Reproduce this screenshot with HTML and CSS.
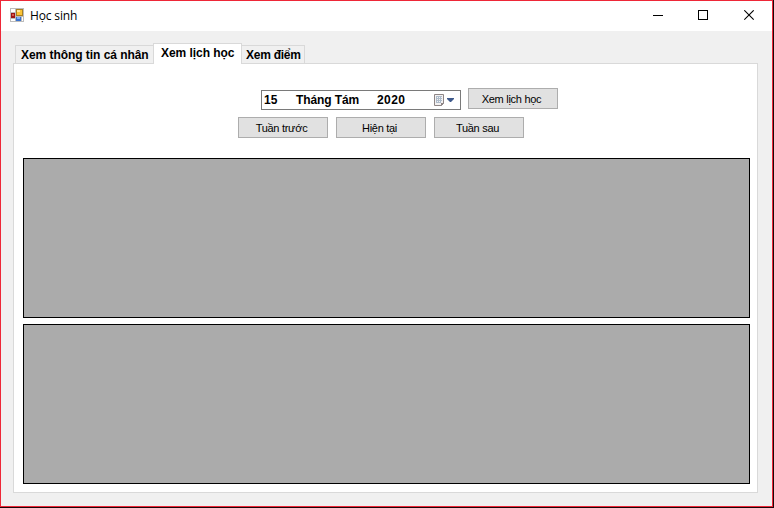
FILE: index.html
```html
<!DOCTYPE html>
<html lang="vi">
<head>
<meta charset="utf-8">
<title>Học sinh</title>
<link rel="stylesheet" href="styles.css">
</head>
<body>
<div class="window">
  <header class="titlebar">
    <svg class="app-icon" width="14" height="14" shape-rendering="crispEdges">
      <path fill="#bcbcbc" d="M0 0h14v14H0z"/>
      <path fill="#fff" d="M1 1h4v3H1zM1 11h4v2H1zM12 9h1v4h-1z"/>
      <path fill="#a98020" d="M6 1h7v7H6z"/>
      <path fill="#fbc437" d="M7 2h5v5H7z"/>
      <path fill="#ffe69a" d="M7 2h3v2H7z"/>
      <path fill="#9c1616" d="M1 5h4v5H1z"/>
      <path fill="#d85a4c" d="M2 6h2v2H2z"/>
      <path fill="#3a72cf" d="M6 9h5v4H6z"/>
      <path fill="#82b0f2" d="M7 9h3v2H7z"/>
    </svg>
    <span class="title">Học sinh</span>
    <div class="controls">
      <svg width="11" height="11" shape-rendering="crispEdges"><path fill="#000" d="M1 5h10v1H1z"/></svg>
      <svg width="11" height="11" shape-rendering="crispEdges"><path fill="none" stroke="#000" d="M.5 .5h9v9h-9z"/></svg>
      <svg width="11" height="11"><path fill="none" stroke="#000" stroke-width="1.1" d="M.3 .3l9.4 9.4M9.7 .3L.3 9.7"/></svg>
    </div>
  </header>
  <main class="client">
    <nav class="tabs">
      <div class="tab tab-info"><span>Xem thông tin cá nhân</span></div>
      <div class="tab tab-schedule active"><span>Xem lịch học</span></div>
      <div class="tab tab-marks"><span>Xem điểm</span></div>
    </nav>
    <section class="page">
      <div class="row date-row">
        <div class="datepicker">
          <span class="day">15</span><span class="month">Tháng Tám</span><span class="year">2020</span>
          <svg class="calendar" width="22" height="14">
            <path fill="#f3f1f1" stroke="#8d8585" d="M1.5 .5h9v9l-2 2h-7z"/>
            <path fill="#8d8585" d="M8 12v-3h3z"/>
            <path stroke="#aebccb" fill="none" d="M3 2.5h6M3 4.5h6M3 6.5h6M3 8.5h5M3.5 2v7M5.5 2v7M7.5 2v7"/>
            <path fill="#3f5a8c" d="M14 4h7v1l-3 3h-1l-3-3z"/>
          </svg>
        </div>
        <button class="btn"><span>Xem lịch học</span></button>
      </div>
      <div class="row week-row">
        <button class="btn"><span>Tuần trước</span></button>
        <button class="btn"><span>Hiện tại</span></button>
        <button class="btn"><span>Tuần sau</span></button>
      </div>
      <div class="grid"></div>
      <div class="grid"></div>
    </section>
  </main>
</div>
</body>
</html>
```
FILE: styles.css
```css
* { box-sizing: border-box; }
body {
  margin: 0;
  height: 508px;
  overflow: hidden;
  background: #1c0508;
  color: #000;
  font-family: "Liberation Sans", Arial, sans-serif;
}
.window {
  width: 773px;
  height: 507px;
  border: 1px solid #ee2737;
  background: #f0f0f0;
}
.titlebar {
  display: flex;
  height: 30px;
  padding-left: 9px;
  background: #fff;
}
.app-icon { margin-top: 7px; }
.title {
  margin-left: 6px;
  font: 12px/29px "Open Sans", sans-serif;
  letter-spacing: -0.15px;
}
.controls {
  display: flex;
  gap: 35px;
  margin: 9px 17px 0 auto;
}
.client { padding: 12px 14px 0 12px; }
.tabs {
  display: flex;
  align-items: flex-end;
  height: 21px;
  margin-bottom: -1px;
  padding-left: 2px;
}
.tab {
  height: 19px;
  border: 1px solid #d9d9d9;
  background: #f0f0f0;
  padding-left: 5px;
  font-size: 12px;
  font-weight: bold;
  line-height: 18px;
  letter-spacing: -0.05px;
  white-space: nowrap;
}
.tab-info { width: 139px; border-right: 0; }
.tab-schedule { width: 89px; margin-left: -1px; }
.tab-marks {
  width: 63px;
  border-left: 0;
  padding-left: 4px;
  letter-spacing: -0.25px;
}
.tab.active {
  z-index: 1;
  height: 21px;
  border-bottom: 0;
  background: #fff;
  padding-left: 7px;
}
.page {
  height: 430px;
  padding: 24px 7px 0 9px;
  border: 1px solid #d9d9d9;
  background: #fff;
}
.row { display: flex; gap: 8px; }
.date-row { height: 22px; padding-left: 238px; gap: 7px; }
.week-row { margin: 7px 0 20px; padding-left: 215px; }
.datepicker {
  display: flex;
  width: 200px;
  height: 20px;
  margin-top: 2px;
  padding-left: 2px;
  border: 1px solid #7a7a7a;
  font-size: 12px;
  font-weight: bold;
  line-height: 18px;
  white-space: nowrap;
}
.day { width: 32px; }
.month { width: 81px; letter-spacing: -0.1px; }
.year { width: 56px; letter-spacing: 0.4px; }
.calendar { margin-top: 3px; }
.btn {
  width: 90px;
  height: 21px;
  padding: 2px 3px 0 0;
  border: 1px solid #adadad;
  background: #e1e1e1;
  color: #000;
  font: 11px/17px "Liberation Sans", Arial, sans-serif;
  letter-spacing: -0.28px;
  text-align: center;
  white-space: nowrap;
}
.grid {
  height: 160px;
  margin-bottom: 6px;
  border: 1px solid #000;
  background: #ababab;
}
```
